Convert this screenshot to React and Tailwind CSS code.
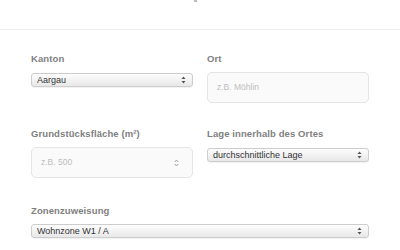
import React from "react";

const font = { fontFamily: '"Helvetica Neue", "Liberation Sans", Arial, sans-serif' };

function Arrows({ className = "" }) {
  return (
    <svg width="5" height="8" viewBox="0 0 5 8" className={className}>
      <path d="M2.5 0.5 L4.5 3 L0.5 3 Z" fill="#555" />
      <path d="M2.5 7.5 L4.5 5 L0.5 5 Z" fill="#555" />
    </svg>
  );
}

function Label({ children }) {
  return (
    <div className="text-[9.5px] leading-[11px] font-bold text-[#808080] mb-[8px] tracking-[0.1px]">
      {children}
    </div>
  );
}

function FakeSelect({ value }) {
  return (
    <div className="relative h-[14px] w-full rounded-[3px] border border-[#cdcdcd] bg-gradient-to-b from-[#fdfdfd] to-[#e8e8e8] shadow-[0_1px_1px_rgba(0,0,0,0.06)] flex items-center pl-[5px] pr-[6px]">
      <span className="flex-1 text-[9px] leading-none text-[#333]">{value}</span>
      <Arrows />
    </div>
  );
}

function TextBox({ placeholder, number }) {
  return (
    <div className="h-[31px] w-full rounded-[5px] border border-[#e4e4e4] bg-[#fafafa] flex items-center pl-[9px] pr-[13px]">
      <span className="flex-1 text-[8.5px] text-[#bdbdbd]">{placeholder}</span>
      {number && (
        <svg width="5" height="8" viewBox="0 0 5 8">
          <path d="M0.8 3 L2.5 1 L4.2 3" stroke="#999" strokeWidth="0.9" fill="none" />
          <path d="M0.8 5 L2.5 7 L4.2 5" stroke="#999" strokeWidth="0.9" fill="none" />
        </svg>
      )}
    </div>
  );
}

export default function App() {
  return (
    <div className="w-[400px] h-[250px] bg-white overflow-hidden" style={font}>
      {/* header strip */}
      <div className="h-[30px] border-b border-[#ededed] flex justify-center">
        <div className="w-[3px] h-[2px] bg-[#bbb] ml-[-10px]" />
      </div>

      <div className="px-[31px] pt-[23px]">
        <div className="grid grid-cols-2 gap-x-[14px]">
          <div>
            <Label>Kanton</Label>
            <div className="pt-[1px]">
              <FakeSelect value="Aargau" />
            </div>
          </div>
          <div>
            <Label>Ort</Label>
            <TextBox placeholder="z.B. Möhlin" />
          </div>
        </div>

        <div className="grid grid-cols-2 gap-x-[14px] mt-[25px]">
          <div>
            <Label>Grundstücksfläche (m²)</Label>
            <TextBox placeholder="z.B. 500" number />
          </div>
          <div>
            <Label>Lage innerhalb des Ortes</Label>
            <div className="pt-[1px]">
              <FakeSelect value="durchschnittliche Lage" />
            </div>
          </div>
        </div>

        <div className="mt-[27px]">
          <Label>Zonenzuweisung</Label>
          <FakeSelect value="Wohnzone W1 / A" />
        </div>
      </div>
    </div>
  );
}
